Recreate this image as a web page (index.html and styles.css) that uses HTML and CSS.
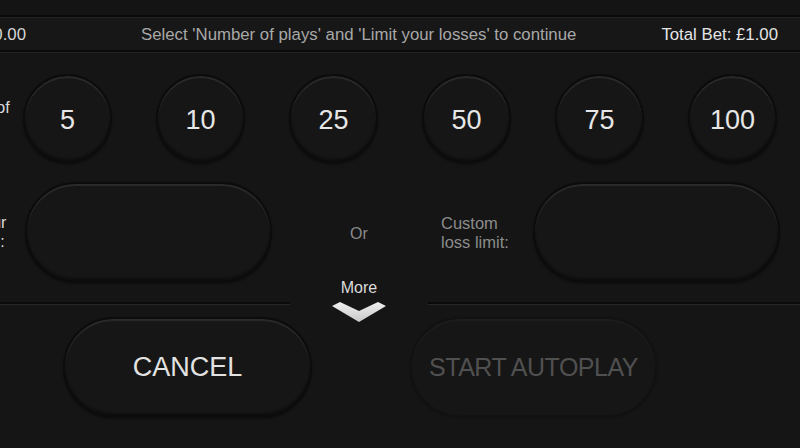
FILE: index.html
```html
<!DOCTYPE html>
<html>
<head>
<meta charset="utf-8">
<link rel="stylesheet" href="styles.css">
</head>
<body>
<div class="screen">
  <div class="topband"></div>
  <div class="infobar">
    <span class="balance">Balance: £1,000.00</span>
    <span class="hint">Select 'Number of plays' and 'Limit your losses' to continue</span>
    <span class="total">Total Bet: £1.00</span>
  </div>
  <div class="plays">
    <div class="label light">Number of<br>plays:</div>
    <div class="chips">
      <div class="chip">5</div>
      <div class="chip">10</div>
      <div class="chip">25</div>
      <div class="chip">50</div>
      <div class="chip">75</div>
      <div class="chip">100</div>
    </div>
  </div>
  <div class="loss">
    <div class="label light loss-label">Limit your<br>losses to:</div>
    <div class="pill"></div>
    <div class="or">Or</div>
    <div class="label dim custom">Custom<br>loss limit:</div>
    <div class="pill"></div>
  </div>
  <div class="more-row">
    <div class="sep sep-left"></div>
    <div class="more">
      <div class="more-text">More</div>
      <svg class="chev" width="56" height="22" viewBox="0 0 56 22">
        <defs>
          <linearGradient id="cg" x1="0" y1="0" x2="0" y2="1">
            <stop offset="0" stop-color="#f0f0f0"/>
            <stop offset="1" stop-color="#c8c8c8"/>
          </linearGradient>
        </defs>
        <polygon points="1,5 9,1 28,10 47,1 55,5 28,21" fill="url(#cg)"/>
      </svg>
    </div>
    <div class="sep sep-right"></div>
  </div>
  <div class="actions">
    <div class="btn cancel">CANCEL</div>
    <div class="btn start">START AUTOPLAY</div>
  </div>
</div>
</body>
</html>
```
FILE: styles.css
```css
html, body {
  margin: 0;
  padding: 0;
  background: #151515;
}
body {
  width: 800px;
  height: 448px;
  overflow: hidden;
  font-family: "Liberation Sans", Arial, sans-serif;
}
.screen {
  width: 800px;
  height: 448px;
  background: #151515;
  overflow: hidden;
}
.topband {
  height: 15px;
  background: #141414;
}
.infobar {
  border-top: 2px solid #0a0a0a;
  border-bottom: 2px solid #0a0a0a;
  box-shadow: inset 0 1px 0 #242424;
  background: #171717;
  display: flex;
  align-items: center;
  font-size: 16.8px;
  padding-top: 2px;
  box-sizing: border-box;
  height: 37px;
}
.balance {
  flex: 0 0 auto;
  width: 150px;
  margin-left: -124px;
  text-align: right;
  color: #d6d6d6;
  white-space: nowrap;
}
.hint {
  flex: 1;
  text-align: center;
  color: #a8a8a8;
  white-space: nowrap;
  padding-left: 30px;
}
.total {
  flex: 0 0 auto;
  color: #e4e4e4;
  padding-right: 22px;
  white-space: nowrap;
}
.plays {
  border-top: 1px solid #242424;
  display: flex;
  align-items: center;
  padding-top: 21px;
}
.label {
  font-size: 16px;
  line-height: 19px;
  white-space: nowrap;
  flex: 0 0 auto;
}
.light { color: #dcdcdc; }
.dim { color: #8c8c8c; font-size: 16.5px; }
.plays .label {
  width: 88px;
  margin-left: -65px;
  margin-top: -4px;
}
.chips {
  display: flex;
  gap: 44px;
}
.chip, .pill, .btn {
  box-sizing: border-box;
  background: #161616;
  border: 2px solid #0c0c0c;
  box-shadow: inset 0 2px 1px rgba(255,255,255,0.09), inset 0 -2px 2px rgba(0,0,0,0.35), 0 2px 2px rgba(0,0,0,0.35);
}
.chip {
  width: 89px;
  height: 89px;
  border-radius: 50%;
  display: flex;
  align-items: center;
  justify-content: center;
  font-size: 27px;
  color: #e6e6e6;
  padding-top: 3px;
}
.loss {
  display: flex;
  align-items: center;
  margin-top: 19px;
}
.loss-label {
  width: 88px;
  margin-left: -63px;
}
.pill {
  width: 247px;
  height: 100px;
  border-radius: 50px;
  flex: 0 0 auto;
}
.or {
  width: 169px;
  box-sizing: border-box;
  padding-left: 5px;
  padding-top: 3px;
  text-align: center;
  font-size: 16px;
  color: #8a8a8a;
  flex: 0 0 auto;
}
.custom {
  width: 92px;
  padding-top: 1px;
}
.more-row {
  display: flex;
  align-items: flex-start;
  margin-top: -5px;
}
.sep {
  margin-top: 25px;
  height: 2px;
  background: #0a0a0a;
  border-bottom: 1px solid #262626;
}
.sep-left { flex: 0 0 290px; }
.sep-right { flex: 1; }
.more {
  flex: 0 0 138px;
  display: flex;
  flex-direction: column;
  align-items: center;
}
.more-text {
  font-size: 16px;
  line-height: 18px;
  color: #dcdcdc;
  padding-top: 2px;
}
.chev {
  display: block;
  margin-top: 4px;
}
.actions {
  display: flex;
  padding-left: 63px;
  gap: 98px;
  margin-top: -6px;
}
.btn {
  width: 249px;
  height: 100px;
  border-radius: 50px;
  display: flex;
  align-items: center;
  justify-content: center;
  white-space: nowrap;
}
.cancel {
  font-size: 27px;
  color: #e2e2e2;
}
.start {
  width: 247px;
  font-size: 25px;
  letter-spacing: -0.5px;
  color: #505050;
  border-color: #121212;
  box-shadow: inset 0 2px 1px rgba(255,255,255,0.03), 0 1px 2px rgba(0,0,0,0.25);
}
```
